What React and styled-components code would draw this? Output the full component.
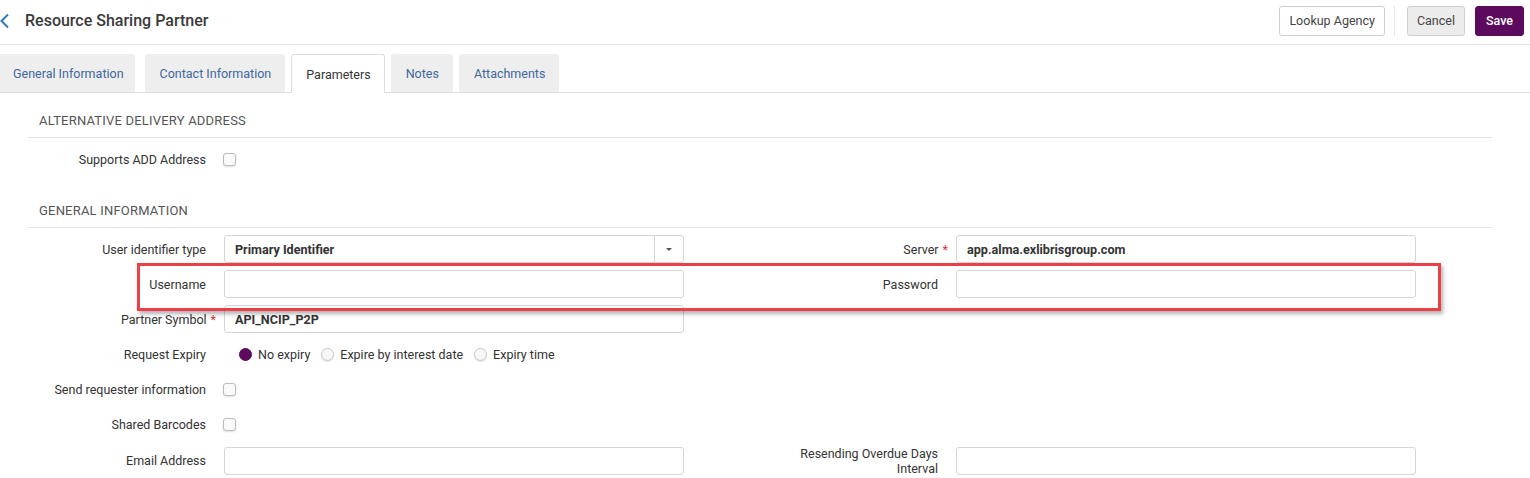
import React from 'react'
import styled, { createGlobalStyle } from 'styled-components'

// styles
const GlobalStyle = createGlobalStyle`
	body {
		margin: 0;
		background: #fff;
		font-family: Roboto, 'Liberation Sans', sans-serif;
		color: #333;
	}
	* {
		box-sizing: border-box;
	}
`

const Page = styled.div`
	position: relative;
	width: 1530px;
	height: 478px;
	overflow: hidden;
`

const Header = styled.header`
	height: 45px;
	border-bottom: 1px solid #e3e3e3;
	display: flex;
	align-items: center;
	justify-content: space-between;
	padding: 0 6px 3px 0;
`

const TitleWrap = styled.div`
	display: flex;
	align-items: center;
	gap: 15px;

	h1 {
		margin: 0;
		font-size: 16px;
		font-weight: 500;
		color: #3a3a3a;
	}
`

const Actions = styled.div`
	display: flex;
	align-items: center;
	gap: 10px;
`

const Divider = styled.span`
	width: 1px;
	height: 30px;
	background: #e6e6e6;
	margin: 0 2px 0 -1px;
`

const Button = styled.button`
	height: 30px;
	padding: 0 ${p => (p.$variant === 'primary' ? 10 : 9)}px;
	border-radius: 3px;
	font-family: inherit;
	font-size: 12.5px;
	border: 1px solid ${p => (p.$variant === 'primary' ? '#5c0a5e' : '#cfcfcf')};
	background: ${p => (p.$variant === 'primary' ? '#5c0a5e' : p.$variant === 'muted' ? '#ececec' : '#fff')};
	color: ${p => (p.$variant === 'primary' ? '#fff' : '#444')};
	font-weight: ${p => (p.$variant === 'primary' ? 500 : 400)};
`

const TabBar = styled.nav`
	display: flex;
	margin-top: 9px;
	border-bottom: 1px solid #dedede;
`

const Tab = styled.div`
	display: flex;
	align-items: center;
	padding: 0 13px 0 14px;
	margin-right: 6px;
	font-size: 12.5px;
	color: ${p => (p.$active ? '#333' : '#41679f')};
	background: ${p => (p.$active ? '#fff' : '#eeeeee')};
	border: 1px solid ${p => (p.$active ? '#dedede' : '#eeeeee')};
	border-bottom: none;
	border-radius: 3px 3px 0 0;
	margin-bottom: ${p => (p.$active ? '-1px' : '0')};
	height: ${p => (p.$active ? '39px' : '38px')};

	&:first-child {
		margin-left: -2px;
		padding-right: 10px;
		margin-right: 10px;
	}
`

const Content = styled.main`
	padding: 0 38px 0 28px;
`

const Section = styled.section`
	& + & {
		margin-top: 10px;
	}
`

const SectionTitle = styled.h2`
	margin: 0;
	padding: 19px 11px 7px;
	font-size: 13px;
	line-height: 18px;
	font-weight: 400;
	text-transform: uppercase;
	letter-spacing: 0.2px;
	color: #555;
	border-bottom: 1px solid #e5e5e5;
`

const Rows = styled.div`
	display: flex;
	flex-direction: column;
	gap: 7.17px;
	padding-top: 7px;
`

const Row = styled.div`
	display: grid;
	grid-template-columns: 704px 684px;
	align-items: center;
	min-height: 28px;
`

const FieldWrap = styled.div`
	display: grid;
	grid-template-columns: ${p => p.$labelWidth}px 460px;
	column-gap: 18px;
	align-items: center;
`

const Label = styled.label`
	justify-self: end;
	text-align: right;
	font-size: 12.5px;
	line-height: 15px;
	color: #333;
	white-space: ${p => (p.$maxWidth ? 'normal' : 'nowrap')};
	max-width: ${p => p.$maxWidth || 400}px;
`

const Star = styled.span`
	color: #d6363c;
	margin-left: 4px;
	margin-right: -10px;
`

const TextBox = styled.div`
	height: 28px;
	border: 1px solid #d3d6db;
	border-radius: 3px;
	padding: 0 10px;
	display: flex;
	align-items: center;
	font-size: 12.6px;
	font-weight: 700;
	color: #333;
	background: #fff;
`

const SelectBox = styled(TextBox)`
	padding-right: 0;
	justify-content: space-between;
`

const SelectArrow = styled.span`
	width: 29px;
	height: 100%;
	border-left: 1px solid #d3d6db;
	display: flex;
	align-items: center;
	justify-content: center;

	&::after {
		content: '';
		border-left: 3px solid transparent;
		border-right: 3px solid transparent;
		border-top: 3px solid #555;
	}
`

const Checkbox = styled.span`
	width: 13px;
	height: 13px;
	border: 1px solid #bcbcbc;
	border-radius: 3px;
	background: #fafafa;
	box-shadow: 0 1px 2px rgba(0, 0, 0, 0.12);
	margin-left: -1px;
`

const RadioGroup = styled.div`
	display: flex;
	align-items: center;
	gap: 11px;
	padding-left: 15px;
	font-size: 12.5px;
	color: #333;
`

const RadioOption = styled.span`
	display: flex;
	align-items: center;
	gap: 6px;
`

const RadioDot = styled.span`
	width: 13px;
	height: 13px;
	border-radius: 50%;
	background: ${p => (p.$checked ? '#5c0a5e' : '#f7f7f7')};
	border: 1px solid ${p => (p.$checked ? '#5c0a5e' : '#cccccc')};
	box-shadow: ${p => (p.$checked ? 'none' : '0 1px 2px rgba(0,0,0,0.12)')};
`

const Highlight = styled.div`
	position: absolute;
	left: 137px;
	top: 263px;
	width: 1304px;
	height: 48px;
	border: 3px solid #ec3f48;
	box-shadow: 2px 3px 4px rgba(0, 0, 0, 0.3);
	pointer-events: none;
`

const BackIcon = () => (
	<svg width='10' height='16' viewBox='0 0 10 16'>
		<polyline points='8,1.5 1.5,8 8,14.5' fill='none' stroke='#2f78be' strokeWidth='2' />
	</svg>
)

const Field = ({ label, required, side, labelMax, children }) => (
	<FieldWrap $labelWidth={side === 'right' ? 206 : 178}>
		<Label $maxWidth={labelMax}>
			{label}
			{required && <Star>*</Star>}
		</Label>
		{children}
	</FieldWrap>
)

const tabs = ['General Information', 'Contact Information', 'Parameters', 'Notes', 'Attachments']

const App = () => (
	<Page>
		<GlobalStyle />
		<Header>
			<TitleWrap>
				<BackIcon />
				<h1>Resource Sharing Partner</h1>
			</TitleWrap>
			<Actions>
				<Button>Lookup Agency</Button>
				<Divider />
				<Button $variant='muted'>Cancel</Button>
				<Button $variant='primary'>Save</Button>
			</Actions>
		</Header>
		<TabBar>
			{tabs.map(t => (
				<Tab key={t} $active={t === 'Parameters'}>
					{t}
				</Tab>
			))}
		</TabBar>
		<Content>
			<Section>
				<SectionTitle>Alternative Delivery Address</SectionTitle>
				<Rows>
					<Row>
						<Field label='Supports ADD Address'>
							<Checkbox />
						</Field>
					</Row>
				</Rows>
			</Section>
			<Section>
				<SectionTitle>General Information</SectionTitle>
				<Rows>
					<Row>
						<Field label='User identifier type'>
							<SelectBox>
								Primary Identifier
								<SelectArrow />
							</SelectBox>
						</Field>
						<Field label='Server' required side='right'>
							<TextBox>app.alma.exlibrisgroup.com</TextBox>
						</Field>
					</Row>
					<Row>
						<Field label='Username'>
							<TextBox />
						</Field>
						<Field label='Password' side='right'>
							<TextBox />
						</Field>
					</Row>
					<Row>
						<Field label='Partner Symbol' required>
							<TextBox>API_NCIP_P2P</TextBox>
						</Field>
					</Row>
					<Row>
						<Field label='Request Expiry'>
							<RadioGroup>
								<RadioOption>
									<RadioDot $checked />
									No expiry
								</RadioOption>
								<RadioOption>
									<RadioDot />
									Expire by interest date
								</RadioOption>
								<RadioOption>
									<RadioDot />
									Expiry time
								</RadioOption>
							</RadioGroup>
						</Field>
					</Row>
					<Row>
						<Field label='Send requester information'>
							<Checkbox />
						</Field>
					</Row>
					<Row>
						<Field label='Shared Barcodes'>
							<Checkbox />
						</Field>
					</Row>
					<Row>
						<Field label='Email Address'>
							<TextBox />
						</Field>
						<Field label='Resending Overdue Days Interval' side='right' labelMax={160}>
							<TextBox />
						</Field>
					</Row>
				</Rows>
			</Section>
		</Content>
		<Highlight />
	</Page>
)

export default App
